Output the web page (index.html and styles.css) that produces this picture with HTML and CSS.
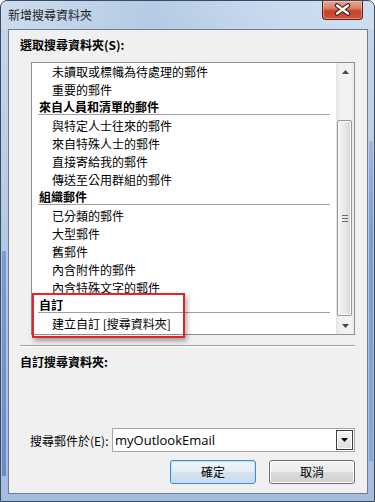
FILE: index.html
```html
<!DOCTYPE html>
<html lang="zh-Hant">
<head>
    <meta charset="UTF-8">
    <title>新增搜尋資料夾</title>
    <link rel="stylesheet" href="styles.css">
</head>
<body>
    <div class="window">
        <div class="titlebar">
            <span class="title">新增搜尋資料夾</span>
            <div class="close-btn">
                <svg width="41" height="19" viewBox="0 0 41 19">
                    <path d="M15 5.5 L26 13.5 M26 5.5 L15 13.5" stroke="#3b1610" stroke-width="4.6" stroke-linecap="round"/>
                    <path d="M15 5.5 L26 13.5 M26 5.5 L15 13.5" stroke="#ffffff" stroke-width="2.4" stroke-linecap="round"/>
                </svg>
            </div>
        </div>

        <div class="client">
            <div class="section-label">選取搜尋資料夾(S):</div>

            <div class="listbox">
                <div class="list">
                    <div class="item">未讀取或標幟為待處理的郵件</div>
                    <div class="item">重要的郵件</div>
                    <div class="group">來自人員和清單的郵件</div>
                    <div class="item">與特定人士往來的郵件</div>
                    <div class="item">來自特殊人士的郵件</div>
                    <div class="item">直接寄給我的郵件</div>
                    <div class="item">傳送至公用群組的郵件</div>
                    <div class="group">組織郵件</div>
                    <div class="item">已分類的郵件</div>
                    <div class="item">大型郵件</div>
                    <div class="item">舊郵件</div>
                    <div class="item">內含附件的郵件</div>
                    <div class="item">內含特殊文字的郵件</div>
                    <div class="group">自訂</div>
                    <div class="item">建立自訂 [搜尋資料夾]</div>
                </div>
                <div class="scrollbar">
                    <div class="sb-btn">
                        <svg width="7" height="4" viewBox="0 0 7 4"><polygon points="0,4 3.5,0 7,4" fill="#4a4a4a"/></svg>
                    </div>
                    <div class="sb-track">
                        <div class="sb-thumb">
                            <svg width="6" height="7" viewBox="0 0 6 7">
                                <rect x="0" y="0" width="6" height="1" fill="#6c6c6c"/>
                                <rect x="0" y="3" width="6" height="1" fill="#6c6c6c"/>
                                <rect x="0" y="6" width="6" height="1" fill="#6c6c6c"/>
                            </svg>
                        </div>
                    </div>
                    <div class="sb-btn">
                        <svg width="7" height="4" viewBox="0 0 7 4"><polygon points="0,0 7,0 3.5,4" fill="#4a4a4a"/></svg>
                    </div>
                </div>
            </div>

            <div class="separator"></div>

            <div class="section-label">自訂搜尋資料夾:</div>

            <div class="search-row">
                <span>搜尋郵件於(E):</span>
                <div class="combo">
                    <span class="combo-text">myOutlookEmail</span>
                    <div class="dd-btn">
                        <svg width="7" height="4" viewBox="0 0 7 4"><polygon points="0,0 7,0 3.5,4" fill="#000"/></svg>
                    </div>
                </div>
            </div>

            <div class="buttons">
                <div class="btn default">確定</div>
                <div class="btn">取消</div>
            </div>

            <!-- red callout around the custom group -->
            <div class="highlight"></div>
        </div>
    </div>
</body>
</html>
```

FILE: styles.css
```css
* {
    box-sizing: border-box;
}

body {
    margin: 0;
    font-family: "Noto Sans CJK TC", "Noto Sans", sans-serif;
    font-size: 12px;
    color: #000;
    background: #fff;
}

/* glass frame: light blue with the darker reflection strips on the sides */
.window {
    width: 375px;
    height: 502px;
    border: 1px solid #3d4a5c;
    border-radius: 7px 7px 0 0;
    background:
        linear-gradient(to bottom, #7d9bd0, #6a8cc6) left 1px top 250px / 4px 225px no-repeat,
        linear-gradient(to bottom, #9db7e2, #7a9bd4 30%, #87a6da) right 1px top 140px / 4px 320px no-repeat,
        linear-gradient(to bottom, #c4d7ee 0%, #b3cae7 45%, #a3bde0 100%);
    padding: 0 6px 7px 7px;
    display: flex;
    flex-direction: column;
}

.titlebar {
    height: 28px;
    display: flex;
    justify-content: space-between;
    align-items: flex-start;
    background: linear-gradient(to right, rgba(255,255,255,0.15) 0%, rgba(120,150,190,0.18) 40%, rgba(255,255,255,0.1) 75%, rgba(255,255,255,0.2) 100%);
    margin: 0 -6px 0 -7px;
    padding: 0 6px 0 7px;
    border-radius: 6px 6px 0 0;
}

.title {
    margin-top: 6px;
    line-height: 16px;
    color: #1e1e1e;
}

.close-btn {
    width: 41px;
    height: 19px;
    margin-right: 5px;
    border: 1px solid #5a2019;
    border-top: none;
    border-radius: 0 0 4px 4px;
    background: linear-gradient(to bottom, #e9a997 0%, #dc7e68 40%, #c7432c 55%, #cc5236 100%);
    box-shadow: inset 0 0 0 1px rgba(255, 210, 200, 0.45);
}

.close-btn svg {
    display: block;
    margin-top: -1px;
    margin-left: -1px;
}

.client {
    flex: 1;
    position: relative;
    border: 1px solid #6f7d90;
    background: #f0f0f0;
    display: flex;
    flex-direction: column;
}

.section-label {
    margin: 7px 0 0 11px;
    line-height: 16px;
    font-weight: bold;
}

.listbox {
    margin: 9px 0 0 22px;
    width: 324px;
    height: 273px;
    border: 1px solid #8e8f8f;
    background: #fff;
    display: flex;
}

.list {
    flex: 1;
    overflow: hidden;
}

.item {
    height: 18px;
    line-height: 18px;
    padding-left: 20px;
    white-space: nowrap;
}

.group {
    height: 16px;
    line-height: 15px;
    margin: 0 6px 2px 6px;
    padding-left: 1px;
    border-bottom: 1px solid #a0a0a0;
    font-weight: bold;
    white-space: nowrap;
}

.scrollbar {
    width: 18px;
    display: flex;
    flex-direction: column;
    background: linear-gradient(to right, #e3e3e3 0%, #f0f0f0 20%, #f3f3f3 80%, #eaeaea 100%);
}

.sb-btn {
    height: 17px;
    display: flex;
    align-items: center;
    justify-content: center;
}

.sb-btn svg {
    display: block;
}

.sb-track {
    flex: 1;
    padding: 40px 2px 0 1px;
}

.sb-thumb {
    height: 196px;
    border: 1px solid #979797;
    border-radius: 2px;
    background: linear-gradient(to right, #f4f4f4 0%, #e9e9e9 50%, #d6d6d6 100%);
    box-shadow: inset 0 0 0 1px #fafafa;
    display: flex;
    align-items: center;
    justify-content: center;
}

.sb-thumb svg {
    display: block;
}

.separator {
    margin: 10px 0 0 11px;
    width: 335px;
    border-top: 1px solid #a0a0a0;
    border-bottom: 1px solid #ffffff;
}

.search-row {
    margin: 58px 12px 0 21px;
    height: 24px;
    display: flex;
    align-items: center;
    justify-content: space-between;
}

.combo {
    width: 243px;
    height: 24px;
    border: 1px solid #a5a5a5;
    background: #fff;
    display: flex;
    align-items: center;
    padding: 0 1px 0 2px;
}

.combo-text {
    font-family: "Open Sans", "Noto Sans", sans-serif;
    font-size: 13px;
}

.dd-btn {
    width: 17px;
    height: 20px;
    margin-left: auto;
    border: 1px solid #3c3c3c;
    background: linear-gradient(to bottom, #f5f5f5, #dedede);
    box-shadow: inset 0 0 0 1px #ffffff;
    display: flex;
    align-items: center;
    justify-content: center;
}

.dd-btn svg {
    display: block;
}

.buttons {
    margin: 8px 12px 0 0;
    display: flex;
    justify-content: flex-end;
    gap: 13px;
}

.btn {
    width: 86px;
    height: 24px;
    border: 1px solid #707070;
    border-radius: 3px;
    background: linear-gradient(to bottom, #f2f2f2 0%, #ebebeb 50%, #dddddd 50%, #cfcfcf 100%);
    box-shadow: inset 0 0 0 1px #fbfbfb;
    display: flex;
    align-items: center;
    justify-content: center;
    line-height: 16px;
}

.btn.default {
    border-color: #3c8ed0;
    background: linear-gradient(to bottom, #eef4f9 0%, #e4edf4 50%, #d5e3ee 50%, #cadbe8 100%);
    box-shadow: inset 0 0 0 1px #bfe0f7;
}

.highlight {
    position: absolute;
    left: 23px;
    top: 263px;
    width: 153px;
    height: 45px;
    border: 2px solid #e5232a;
    box-shadow: 2px 3px 5px rgba(0, 0, 0, 0.35);
}
```
